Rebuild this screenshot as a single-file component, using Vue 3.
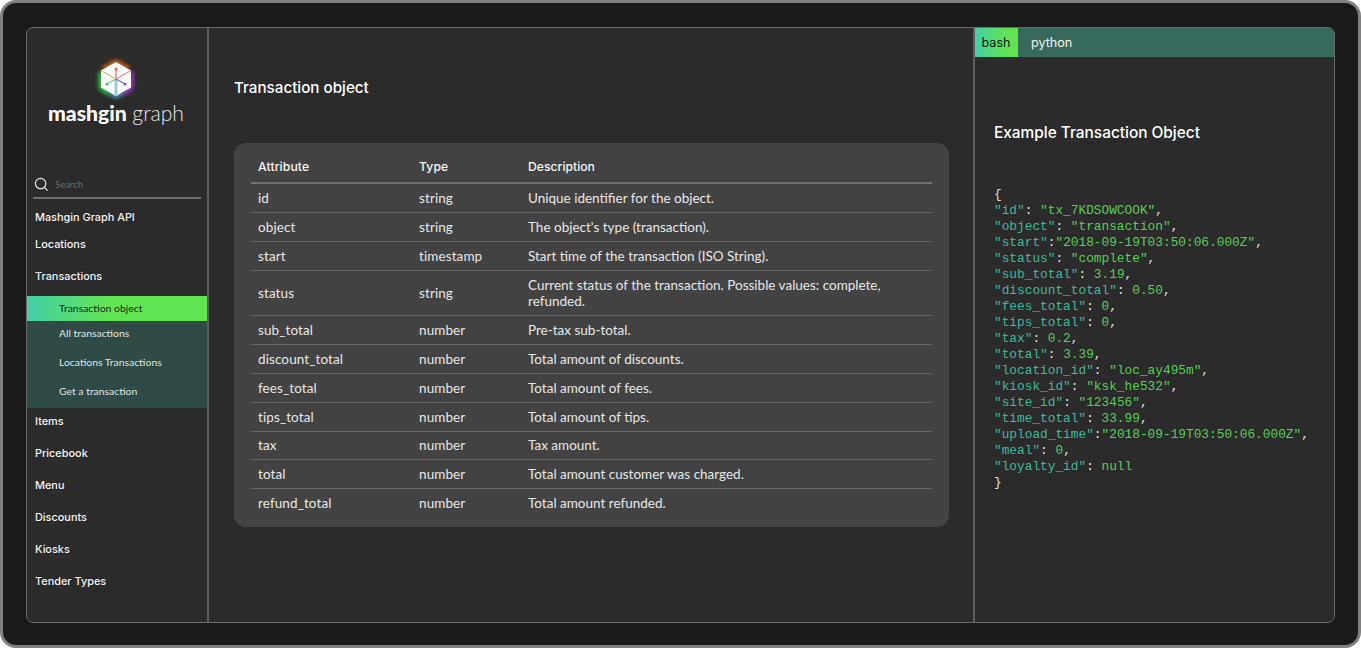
<script setup>
const rows = [
  ['id', 'string', 'Unique identifier for the object.'],
  ['object', 'string', "The object's type (transaction)."],
  ['start', 'timestamp', 'Start time of the transaction (ISO String).'],
  ['status', 'string', 'Current status of the transaction. Possible values: complete, refunded.'],
  ['sub_total', 'number', 'Pre-tax sub-total.'],
  ['discount_total', 'number', 'Total amount of discounts.'],
  ['fees_total', 'number', 'Total amount of fees.'],
  ['tips_total', 'number', 'Total amount of tips.'],
  ['tax', 'number', 'Tax amount.'],
  ['total', 'number', 'Total amount customer was charged.'],
  ['refund_total', 'number', 'Total amount refunded.'],
]
const code = [
  ['"id"', ': ', '"tx_7KDSOWCOOK"', ','],
  ['"object"', ': ', '"transaction"', ','],
  ['"start"', ':', '"2018-09-19T03:50:06.000Z"', ','],
  ['"status"', ': ', '"complete"', ','],
  ['"sub_total"', ': ', '3.19', ','],
  ['"discount_total"', ': ', '0.50', ','],
  ['"fees_total"', ': ', '0', ','],
  ['"tips_total"', ': ', '0', ','],
  ['"tax"', ': ', '0.2', ','],
  ['"total"', ': ', '3.39', ','],
  ['"location_id"', ': ', '"loc_ay495m"', ','],
  ['"kiosk_id"', ': ', '"ksk_he532"', ','],
  ['"site_id"', ': ', '"123456"', ','],
  ['"time_total"', ': ', '33.99', ','],
  ['"upload_time"', ':', '"2018-09-19T03:50:06.000Z"', ','],
  ['"meal"', ': ', '0', ','],
  ['"loyalty_id"', ': ', 'null', ''],
]
</script>

<template>
  <div class="frame">
    <div class="panel">
      <aside class="sidebar">
        <div class="logo">
          <svg class="mark" width="44" height="44" viewBox="0 0 44 44">
            <defs>
              <filter id="blur" x="-40%" y="-40%" width="180%" height="180%">
                <feGaussianBlur stdDeviation="2.1" />
              </filter>
            </defs>
            <g fill="none" stroke-width="4" filter="url(#blur)">
              <path d="M7 15 L7 31 L15 36" stroke="#2ef04c" />
              <path d="M9 12 L22 5 L35 12" stroke="#ff6a18" />
              <path d="M37 15 L37 31 L29 36" stroke="#b03cf0" />
              <path d="M16 36 L22 39 L28 36" stroke="#58a8c8" />
            </g>
            <polygon points="22,5 37,13.5 37,30.5 22,39 7,30.5 7,13.5" fill="#fff" />
            <path d="M22 22 L7 13.5" stroke="#c9c47a" stroke-width="1.2" />
            <path d="M22 22 L37 13.5" stroke="#d98aa8" stroke-width="1.2" />
            <path d="M22 22 L22 39" stroke="#9cc8d8" stroke-width="3" />
            <path d="M22 22 L22 12" stroke="#ef6a4a" stroke-width="1.2" />
            <circle cx="22" cy="12" r="1.6" fill="#ef6a4a" />
            <path d="M22 22 L13 27" stroke="#7cc47a" stroke-width="1.2" />
            <circle cx="13" cy="27" r="1.6" fill="#6bb86b" />
            <path d="M22 22 L31 27" stroke="#8a6ab8" stroke-width="1.2" />
            <circle cx="31" cy="27" r="1.6" fill="#7a5aa8" />
          </svg>
          <div class="wordmark"><b>mashgin</b> <span>graph</span></div>
        </div>
        <div class="search">
          <svg width="15" height="15" viewBox="0 0 15 15" fill="none" stroke="#e8e8e8" stroke-width="1.2">
            <circle cx="6.6" cy="6.6" r="5.2" />
            <path d="M10.4 10.4 L13.6 13.6" />
          </svg>
          <span>Search</span>
        </div>
        <nav class="nav">
          <a class="top first">Mashgin Graph API</a>
          <a class="top loc">Locations</a>
          <a class="top tx">Transactions</a>
          <div class="sub">
            <a class="active">Transaction object</a>
            <a class="s1">All transactions</a>
            <a>Locations Transactions</a>
            <a>Get a transaction</a>
          </div>
          <a class="top item one">Items</a>
          <a class="top item">Pricebook</a>
          <a class="top item">Menu</a>
          <a class="top item">Discounts</a>
          <a class="top item">Kiosks</a>
          <a class="top item">Tender Types</a>
        </nav>
      </aside>

      <main class="main">
        <h1>Transaction object</h1>
        <div class="card">
          <div class="row head">
            <div>Attribute</div>
            <div>Type</div>
            <div>Description</div>
          </div>
          <div v-for="r in rows" :key="r[0]" class="row" :class="{ tall: r[0] === 'status' }">
            <div>{{ r[0] }}</div>
            <div>{{ r[1] }}</div>
            <div>{{ r[2] }}</div>
          </div>
        </div>
      </main>

      <section class="right">
        <div class="tabs">
          <div class="tab on">bash</div>
          <div class="tab">python</div>
        </div>
        <div class="doc">
          <h2>Example Transaction Object</h2>
          <div class="code">
            <div class="brace">{</div>
            <div v-for="c in code" :key="c[0]"><span class="k">{{ c[0] }}</span><span class="brace">{{ c[1] }}</span><span class="v">{{ c[2] }}</span><span class="brace">{{ c[3] }}</span></div>
            <div class="brace">}</div>
          </div>
        </div>
      </section>
    </div>
  </div>
</template>

<style>
html, body { margin: 0; background: #fff; }
</style>

<style scoped>
.frame {
  box-sizing: border-box;
  width: 1361px;
  height: 648px;
  padding: 24px 23px 22px;
  background: #1a1a1a;
  border: 3px solid #808080;
  border-radius: 16px;
  font-family: "Inter", "Liberation Sans", sans-serif;
  color: #fff;
}
.panel {
  box-sizing: border-box;
  display: flex;
  height: 100%;
  border: 1px solid #6a6a6a;
  border-radius: 7px;
  background: #2b2b2b;
  overflow: hidden;
}
.sidebar {
  width: 180px;
  flex: none;
  border-right: 2px solid #5c5c5c;
}
.logo {
  height: 145px;
  display: flex;
  flex-direction: column;
  align-items: center;
  padding: 29px 2px 0 0;
  box-sizing: border-box;
}
.mark { display: block; }
.wordmark {
  margin-top: -1px;
  font-family: "Lato", sans-serif;
  font-size: 21.2px;
  line-height: 26px;
  white-space: nowrap;
}
.wordmark b { font-weight: 900; }
.wordmark span { font-weight: 300; color: #e4e4e4; }
.search {
  margin: 0 6px;
  height: 26px;
  box-sizing: border-box;
  border-bottom: 2px solid #6e6e6e;
  display: flex;
  align-items: center;
  gap: 6px;
  padding: 0 0 1px 1px;
}
.search span {
  font-family: "Lato", sans-serif;
  font-size: 9.5px;
  color: #6a6a6a;
}
.nav { display: flex; flex-direction: column; }
.nav a { display: block; white-space: nowrap; }
.top {
  padding-left: 8px;
  font-size: 10.9px;
  font-weight: 500;
  color: #f2f2f2;
  line-height: 16px;
}
.first { margin-top: 9.5px; }
.loc { margin-top: 11px; }
.tx { margin-top: 16px; }
.item { margin-top: 16px; }
.item.one { margin-top: 5px; }
.sub {
  margin-top: 12.5px;
  background: #304a45;
  padding-bottom: 9px;
}
.sub a {
  font-family: "Lato", sans-serif;
  font-size: 10.4px;
  line-height: 16px;
  color: #dfe5e3;
  padding-left: 32px;
  margin-top: 13px;
}
.sub .active {
  margin-top: 0;
  height: 25px;
  line-height: 25px;
  background: linear-gradient(90deg, #45cfa8 0%, #62e354 45%, #62e354 100%);
  color: #17261c;
}
.sub .s1 { margin-top: 4px; }
.main {
  flex: 1;
  min-width: 0;
  padding: 0 24px 0 25px;
  border-right: 2px solid #5c5c5c;
}
h1 {
  margin: 49.5px 0 45.5px;
  font-size: 15.2px;
  line-height: 20px;
  font-weight: 500;
}
.card {
  background: #434343;
  border-radius: 12px;
  padding: 8px 17px;
  height: 384px;
  box-sizing: border-box;
}
.row {
  display: grid;
  grid-template-columns: 161px 109px 1fr;
  align-items: center;
  height: 28.8px;
  box-sizing: border-box;
  padding: 0 7px;
  border-bottom: 1px solid #666;
  font-family: "Lato", sans-serif;
  font-size: 13.5px;
  line-height: 16px;
  color: #e6e6e6;
}
.row > div:nth-child(-n+2) { letter-spacing: 0.1px; }
.row:last-child { border-bottom-color: transparent; }
.row.tall { height: 45.6px; }
.head {
  height: 33.4px;
  border-bottom: 2px solid #707070;
  font-family: "Inter", sans-serif;
  font-weight: 500;
  font-size: 12.2px;
  color: #f5f5f5;
}
.right {
  flex: 0 0 359px;
}
.tabs {
  display: flex;
  height: 29px;
  background: #376a5c;
  font-family: "Inter", sans-serif;
  font-size: 12.6px;
  line-height: 29px;
}
.tab { padding: 0 13px; color: #f0f0f0; }
.tab.on {
  width: 43px;
  box-sizing: border-box;
  padding: 0 0 0 6.5px;
  background: linear-gradient(90deg, #45cfa8, #62e354 70%);
  color: #11221a;
}
.doc { padding: 66px 19px 0; }
h2 {
  margin: 0 0 44px;
  font-size: 15.4px;
  line-height: 20px;
  font-weight: 500;
}
.code {
  font-family: "Liberation Mono", monospace;
  font-size: 12.8px;
  line-height: 16px;
  white-space: pre;
}
.brace { color: #e0e0e0; }
.k { color: #42b598; }
.v { color: #58cc58; }
</style>
